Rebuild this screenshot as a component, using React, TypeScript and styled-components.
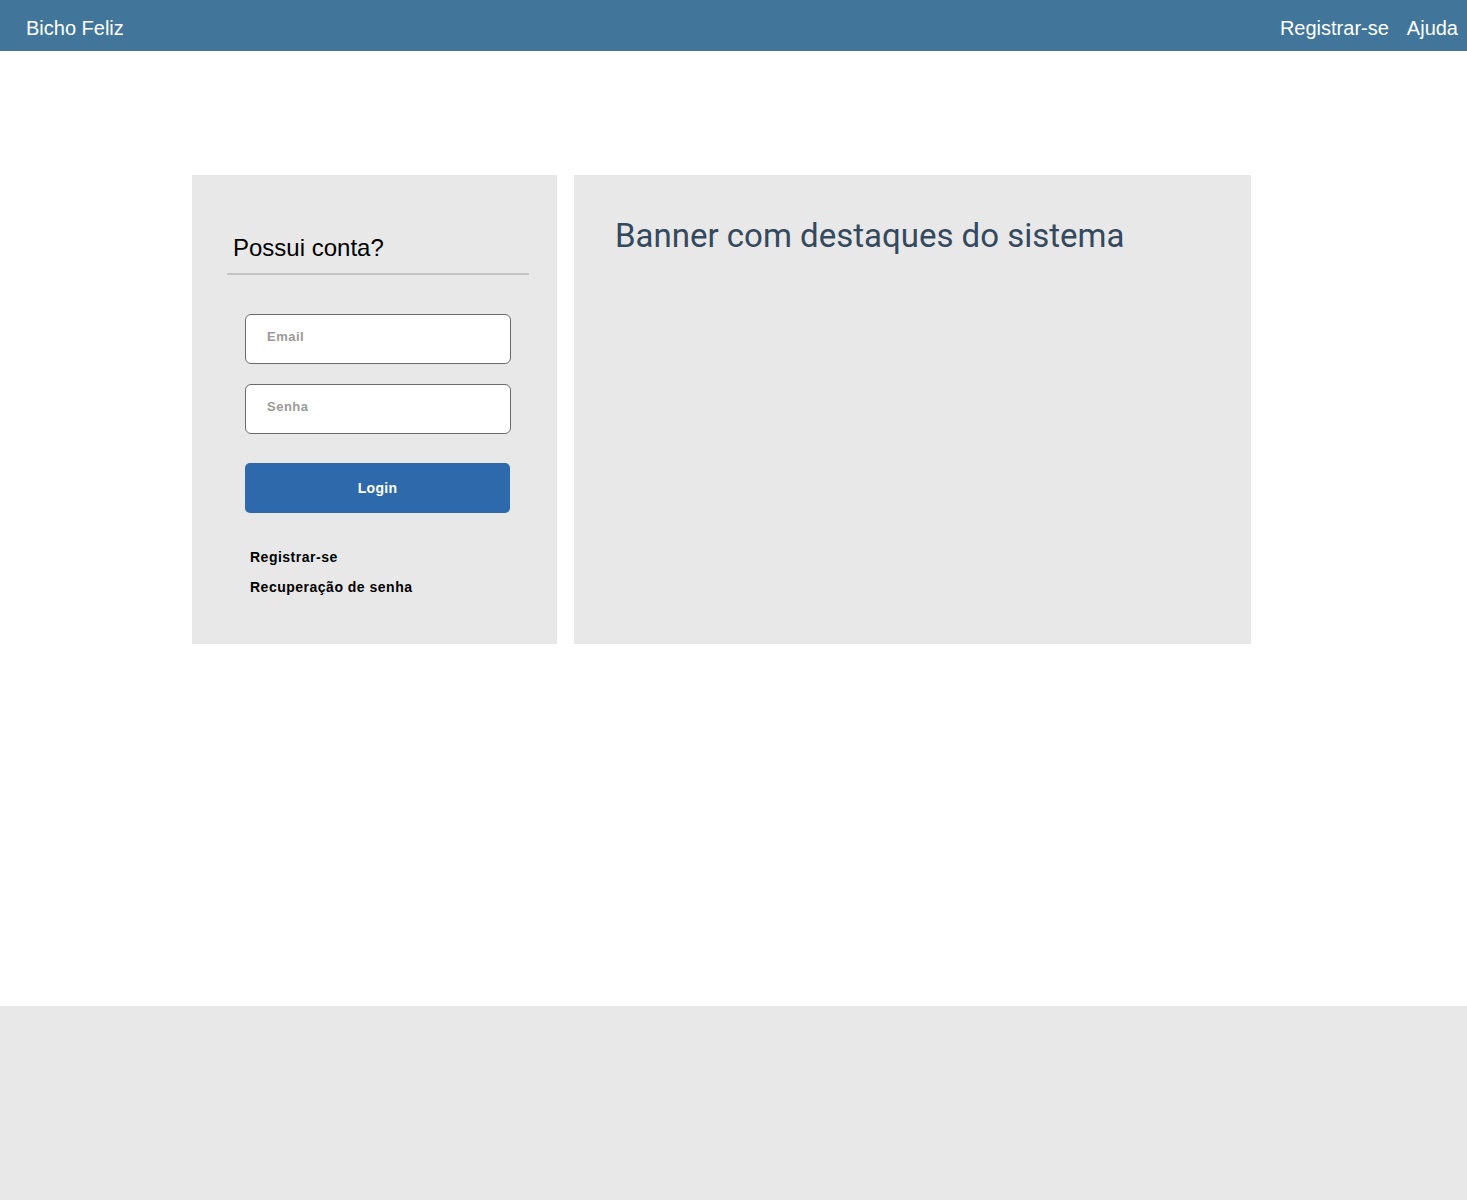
import React from "react";
import styled, { createGlobalStyle } from "styled-components";

const GlobalStyle = createGlobalStyle`
  html, body {
    margin: 0;
    padding: 0;
    background: #ffffff;
    font-family: "Liberation Sans", Arial, sans-serif;
  }
  * { box-sizing: border-box; }
`;

const Header = styled.header`
  height: 51px;
  background: #41769a;
  display: flex;
  align-items: center;
  justify-content: space-between;
  padding: 5px 9px 0 26px;
  color: #ffffff;
  font-size: 20px;
`;

const Brand = styled.div`
  font-size: 20px;
  color: #ffffff;
`;

const Nav = styled.nav`
  display: flex;
  gap: 18px;
`;

const NavLink = styled.a`
  color: #ffffff;
  text-decoration: none;
  font-size: 20px;
`;

const Main = styled.main`
  height: 955px;
  padding-top: 124px;
  padding-left: 192px;
`;

const Row = styled.div`
  display: flex;
  gap: 17px;
  align-items: stretch;
`;

const Card = styled.section<{ $width: number }>`
  width: ${(p) => p.$width}px;
  height: 469px;
  background: #e8e8e8;
`;

const LoginCard = styled(Card)`
  padding: 59px 28px 0 35px;
`;

const Title = styled.h2`
  margin: 0;
  padding: 0 0 11px 6px;
  font-weight: 400;
  font-size: 24px;
  line-height: 28px;
  color: #000000;
  border-bottom: 2px solid #c4c4c4;
`;

const Form = styled.form`
  display: flex;
  flex-direction: column;
  margin: 39px 0 0 18px;
  width: 266px;
`;

const Input = styled.input`
  width: 266px;
  height: 50px;
  border: 1px solid #6b6b6b;
  border-radius: 6px;
  background: #ffffff;
  padding: 0 0 5px 21px;
  font-family: "Liberation Sans", Arial, sans-serif;
  font-weight: 700;
  font-size: 13px;
  letter-spacing: 0.5px;
  color: #333;
  outline: none;
  & + & {
    margin-top: 20px;
  }
  &::placeholder {
    color: #9a9a9a;
  }
`;

const Button = styled.button`
  margin-top: 29px;
  width: 265px;
  height: 50px;
  border: none;
  border-radius: 5px;
  background: #2d69ab;
  color: #ffffff;
  font-family: "Liberation Sans", Arial, sans-serif;
  font-weight: 700;
  font-size: 14px;
  letter-spacing: 0.3px;
  cursor: pointer;
`;

const Links = styled.div`
  display: flex;
  flex-direction: column;
  margin: 29px 0 0 23px;
`;

const TextLink = styled.a`
  color: #000000;
  text-decoration: none;
  font-weight: 700;
  font-size: 14px;
  letter-spacing: 0.5px;
  line-height: 30px;
`;

const BannerCard = styled(Card)`
  padding: 41px 0 0 41px;
`;

const BannerTitle = styled.h1`
  margin: 0;
  font-family: Roboto, "Liberation Sans", sans-serif;
  font-weight: 400;
  font-size: 33px;
  line-height: 40px;
  color: #34495e;
`;

const Footer = styled.footer`
  height: 194px;
  background: #e8e8e8;
`;

export default function App() {
  return (
    <>
      <GlobalStyle />
      <Header>
        <Brand>Bicho Feliz</Brand>
        <Nav>
          <NavLink href="#">Registrar-se</NavLink>
          <NavLink href="#">Ajuda</NavLink>
        </Nav>
      </Header>
      <Main>
        <Row>
          <LoginCard $width={365}>
            <Title>Possui conta?</Title>
            <Form onSubmit={(e) => e.preventDefault()}>
              <Input type="email" placeholder="Email" />
              <Input type="password" placeholder="Senha" />
              <Button type="submit">Login</Button>
            </Form>
            <Links>
              <TextLink href="#">Registrar-se</TextLink>
              <TextLink href="#">Recuperação de senha</TextLink>
            </Links>
          </LoginCard>
          <BannerCard $width={677}>
            <BannerTitle>Banner com destaques do sistema</BannerTitle>
          </BannerCard>
        </Row>
      </Main>
      <Footer />
    </>
  );
}
